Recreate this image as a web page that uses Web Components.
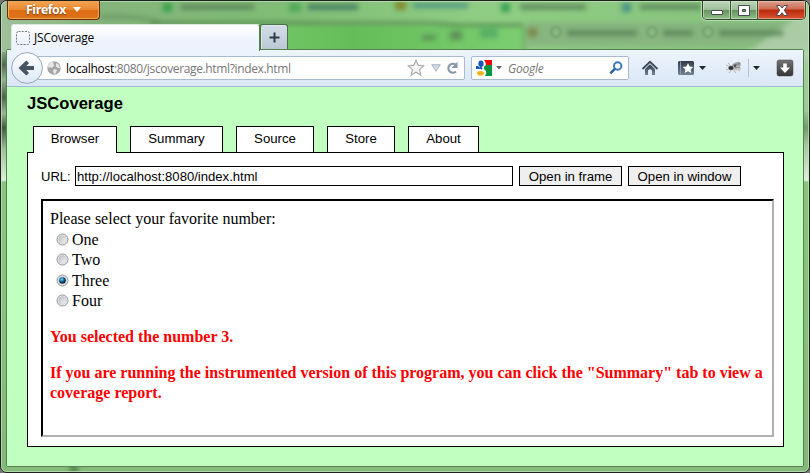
<!DOCTYPE html>
<html lang="en"><head><meta charset="utf-8"><title>JSCoverage</title>
<style>
html,body{margin:0;height:100%;overflow:hidden;background:#777}
</style></head><body>
<browser-window></browser-window>
<script>
const define=(name,html)=>customElements.define(name,class extends HTMLElement{
  constructor(){super();this.attachShadow({mode:'open'}).innerHTML=html;}
});

define('glass-backdrop',`<style>:host{display:block;position:absolute;inset:0;overflow:hidden}svg{display:block}.soft{filter:blur(2.6px)}.ghost{filter:blur(2.4px)}</style>
<svg width="808" height="471" viewBox="1 1 808 471">
<defs>
<linearGradient id="g" x1="0" x2="1" y1="0" y2="0"><stop offset="0" stop-color="#a0c09a"/><stop offset=".12" stop-color="#85b47c"/><stop offset=".35" stop-color="#80bd75"/><stop offset=".6" stop-color="#8fcd84"/><stop offset="1" stop-color="#87c27c"/></linearGradient>
<linearGradient id="m" x1="0" x2="1" y1="0" y2="0"><stop offset="0" stop-color="#86ba7d"/><stop offset=".3" stop-color="#79cb6c"/><stop offset=".6" stop-color="#64bd58"/><stop offset="1" stop-color="#7cce70"/></linearGradient>
<linearGradient id="s" x1="0" x2="0" y1="0" y2="1"><stop offset="0" stop-color="#86a67f"/><stop offset=".03" stop-color="#546653"/><stop offset=".065" stop-color="#94b28e"/><stop offset=".107" stop-color="#52634f"/><stop offset=".145" stop-color="#9bb695"/><stop offset=".18" stop-color="#465644"/><stop offset=".23" stop-color="#9fbc9a"/><stop offset=".3" stop-color="#dcecda"/><stop offset=".306" stop-color="#dcecda"/><stop offset=".308" stop-color="#8bc481"/><stop offset="1" stop-color="#82b879"/></linearGradient>
<linearGradient id="r" x1="0" x2="0" y1="0" y2="1"><stop offset="0" stop-color="#a3cc9c"/><stop offset=".14" stop-color="#98cb90"/><stop offset=".18" stop-color="#6f9c68"/><stop offset=".22" stop-color="#a5c6a0"/><stop offset=".3" stop-color="#dcecda"/><stop offset=".306" stop-color="#dcecda"/><stop offset=".308" stop-color="#8bc481"/><stop offset="1" stop-color="#82b879"/></linearGradient>
</defs>
<rect width="810" height="473" fill="#84bc7a"/>
<rect width="810" height="52" fill="url(#g)"/>
<rect y="52" width="7" height="421" fill="url(#s)"/>
<rect x="803" y="52" width="7" height="421" fill="url(#r)"/>
<g class="soft">
<rect x="98" y="26" width="425" height="40" fill="url(#m)"/>
<path d="M150 23H430L455 25H523" fill="none" stroke="#4a7445" stroke-width="3" opacity=".75"/>
<path d="M524 26V52" fill="none" stroke="#55804f" stroke-width="3" opacity=".5"/>
<path d="M100 17q30-2 60 5" fill="none" stroke="#54824d" stroke-width="4" opacity=".5"/>
<rect x="527" y="22" width="290" height="24" fill="#87b67f"/>
<path d="M735 60L830 -5V60Z" fill="#b4d1af" opacity=".8"/>
</g>
<g class="ghost" fill="#568056" opacity=".75">
<rect x="163" y="3" width="9" height="9" fill="#219b3c"/><rect x="181" y="4" width="73" height="6"/>
<rect x="289" y="3" width="12" height="9" fill="#43a151"/><rect x="308" y="4" width="50" height="6" fill="#38715f"/>
<rect x="395" y="1" width="11" height="9" fill="#807a17"/><rect x="413" y="3" width="55" height="5" fill="#3f8980"/>
<rect x="501" y="3" width="9" height="9" fill="#209443"/><rect x="520" y="4" width="66" height="6"/>
<rect x="622" y="3" width="9" height="9" fill="#34818b"/><rect x="640" y="4" width="61" height="6"/>
<rect x="422" y="35" width="14" height="5"/><rect x="450" y="31" width="12" height="9"/><rect x="480" y="28" width="18" height="10" fill="#3e9865" opacity=".7"/>
<rect x="528" y="28" width="9" height="9" fill="#807a3c"/>
<rect x="567" y="30" width="70" height="6"/><rect x="663" y="30" width="30" height="6"/><rect x="719" y="30" width="64" height="6"/>
<rect x="70" y="465" width="8" height="8" fill="#416f3c"/>
</g>
<g fill="none" stroke="#6d9b66" stroke-width="1.5" style="filter:blur(1.2px)"><circle cx="556" cy="32" r="5"/><circle cx="652" cy="32" r="5"/><circle cx="708" cy="32" r="5"/></g></svg>`);

define('firefox-button',`<style>:host{display:flex;align-items:center;box-sizing:border-box;width:93px;height:19px;padding:0 0 1px 18px;gap:7px;
border:1px solid #6b2f08;border-top:0;border-radius:0 0 4px 4px;background:linear-gradient(#f3a453,#e98932 48%,#dd6d14 52%,#dc7519);box-shadow:inset 1px 0 #f2b06a,inset -1px -1px #efa356;color:#fff;font:bold 12.3px "Open Sans",sans-serif;letter-spacing:-.4px;text-shadow:0 1px 2px #7a3600}</style>
<slot></slot><svg width="8" height="5"><path d="M0 0H8L4 5Z" fill="#fff"/></svg>`);

define('window-controls',`<style>:host{display:flex;box-sizing:border-box;width:104px;height:19px;border:1px solid #304a2d;border-top:0;border-radius:0 0 5px 5px;overflow:hidden;box-shadow:0 0 1px 1px #b9dcb4}
span{display:grid;place-items:center;width:27px;background:linear-gradient(#bdd5b8,#9ebf98 47%,#67915f 50%,#8ebe84);box-shadow:inset 0 0 0 1px #d5e8d199;border-right:1px solid #395537}
span:last-child{flex:1;border:0;background:linear-gradient(#dca394,#cc6b51 45%,#b92909 50%,#d5512f 95%);box-shadow:inset 0 0 0 1px #f2c1b399}</style>
<span><svg width="14" height="14"><rect x="1.5" y="7.5" width="11" height="4" rx=".5" fill="#fff" stroke="#454c55"/></svg></span>
<span style="width:26px"><svg width="14" height="13"><path d="M1.5 1.5H12.5V11.5H1.5ZM5.5 5.5V7.5H8.5V5.5Z" fill="#fff" fill-rule="evenodd" stroke="#454c55"/></svg></span>
<span><svg width="14" height="13"><path d="M1.5 1.5H5L7 4L9 1.5H12.5L9.3 6.2L12.7 11.5H9L7 8.7L5 11.5H1.3L4.7 6.2Z" fill="#fff" stroke="#55454d"/></svg></span>`);

define('browser-tab',`<style>:host{display:flex;align-items:center;box-sizing:border-box;width:249px;height:27px;padding:0 0 1px 4px;gap:4px;background:linear-gradient(#fff,#edf3fc 65%,#ecf3fc);border:1px solid #dcebdc;border-bottom:0;border-right-color:#57824f;border-radius:3px 3px 0 0;font:12px "Open Sans",sans-serif;letter-spacing:-.2px;color:#000}
svg{flex:none}</style><svg width="14" height="14"><rect x=".5" y=".5" width="13" height="13" rx="2" fill="none" stroke="#737982" stroke-dasharray="2 1.2"/></svg><slot></slot>`);

define('new-tab',`<style>:host{display:grid;place-items:center;box-sizing:border-box;width:28px;height:25px;background:linear-gradient(#d3dde6,#bac8d5);border:1px solid #477344;border-bottom:0;border-radius:3px 3px 0 0;box-shadow:inset 1px 1px #e1e8ed}</style>
<svg width="11" height="11"><path d="M4.5 .5V4.5H.5V6.5H4.5V10.5H6.5V6.5H10.5V4.5H6.5V.5Z" fill="#303a46"/></svg>`);

define('back-button',`<style>:host{display:block;width:32px;height:32px;margin-right:-15px;z-index:1}svg{display:block}</style>
<svg width="32" height="32"><defs><linearGradient id="g" x2="0" y2="1"><stop stop-color="#fff"/><stop offset="1" stop-color="#dce8f5"/></linearGradient></defs><circle cx="16" cy="16" r="15.4" fill="url(#g)" stroke="#95a7bd"/><path d="M7.5 16L15.3 8.5L18 11.2L15.3 14.1H23V18H15.3L18 20.9L15.3 23.6Z" fill="#465360"/></svg>`);

define('address-bar',`<style>:host{display:flex;align-items:center;box-sizing:border-box;width:437px;height:24px;padding:0 5px 0 18px;background:#fff;border:1px solid #a8bbd2;border-radius:2px;font:12px "Open Sans",sans-serif;color:#777}
b{font-weight:400;color:#000;letter-spacing:-.25px}.t{flex:1;margin-left:5px;white-space:nowrap}svg{flex:none}.s{margin-right:6px}.d{margin-right:4px}.h{letter-spacing:-.36px}</style>
<svg width="14" height="14"><circle cx="7" cy="7" r="6.7" fill="#a5a5a5"/><path d="M1 4L4 1L7 1.4L6 3L7.5 4L5 7L3 6L1.5 7ZM9 2L12 4L13 7L11 7L9 5.5ZM7 8L10 9L9 12L7 13L6 10Z" fill="#e8e8e8"/></svg>
<span class="t"><b>localhost</b><span class="h">:8080/jscoverage.html?index.html</span></span>
<svg class="s" width="18" height="18"><path d="M9 1.3L11.2 6.3L16.7 6.9L12.6 10.6L13.8 16.1L9 13.2L4.2 16.1L5.4 10.6L1.3 6.9L6.8 6.3Z" fill="#f4f4f4" stroke="#a6a6a6" stroke-width="1.1"/></svg>
<svg class="d" width="10" height="8"><path d="M.7 .7H9.3L5 7.3Z" fill="#cfdae6" stroke="#acb5c2"/></svg>
<svg width="14" height="14"><path d="M10.4 3.5A4.5 4.5 0 1 0 11 10.5" fill="none" stroke="#8898a8" stroke-width="2.2"/><path d="M12.5 .8V7H6.5Z" fill="#8898a8"/></svg>`);

define('search-bar',`<style>:host{display:flex;align-items:center;box-sizing:border-box;width:158px;height:24px;margin-left:6px;padding:0 5px 0 4px;background:#fff;border:1px solid #a8bbd2;border-radius:2px;font:italic 12px "Open Sans",sans-serif;letter-spacing:-.25px;color:#777}span{flex:1;margin-left:6px}.d{margin-left:4px}</style>
<svg width="16" height="16"><rect width="16" height="16" fill="#fff"/><path d="M8 0H16V5H10Q10 2 8 0Z" fill="#ed0909"/><path d="M10 5H16V16H9Q12 12 8 9Q7 7 10 5Z" fill="#0a963e"/><path d="M0 6H2L5 9H0Z" fill="#1459bd"/><ellipse cx="5" cy="3.7" rx="2.6" ry="3.3" fill="#1557bd"/><path d="M4 7L6 9" stroke="#1557bd" stroke-width="2"/><ellipse cx="4.5" cy="13.2" rx="3.4" ry="2.3" fill="#efb416"/></svg>
<svg class="d" width="6" height="4"><path d="M0 0H6L3 3.5Z" fill="#666"/></svg><span>Google</span>
<svg width="14" height="14"><circle cx="8.7" cy="5" r="3.7" fill="#fff" stroke="#3a7ab7" stroke-width="2"/><path d="M6.1 7.6L1.3 12.4" stroke="#2f649b" stroke-width="2.5"/></svg>`);

define('tool-icons',`<style>:host{display:flex;align-items:center;margin-left:12px}svg{display:block}</style>
<svg width="153" height="20" viewBox="641 58 153 20"><defs><linearGradient id="g" x2="0" y2="1"><stop stop-color="#303c4a"/><stop offset="1" stop-color="#718294"/></linearGradient><linearGradient id="d" x2="0" y2="1"><stop stop-color="#747474"/><stop offset="1" stop-color="#353535"/></linearGradient></defs>
<path d="M642.5 69L650 61.8L657.5 69" fill="none" stroke="#3c4855" stroke-width="1.8"/><path d="M645 69L650 64.3L655 69V75H652V70.5Q650 68 648 70.5V75H645Z" fill="url(#g)"/>
<rect x="678" y="61" width="16" height="14" rx="1.5" fill="url(#g)"/><path d="M680.5 61.5V74.5" stroke="#8c9aaa"/><path d="M688 63L689.6 66.4L693.3 66.9L690.6 69.4L691.3 73.1L688 71.3L684.7 73.1L685.4 69.4L682.7 66.9L686.4 66.4Z" fill="#fff"/>
<path d="M699 66H706L702.5 70ZM753 66H760L756.5 70Z" fill="#202833"/>
<g><path d="M726 65L730 67M726 70L730 68.5M729 73L732 69M736 73L733 69M740 71L735 68M728 63L732 67" stroke="#b2b3b5"/><ellipse cx="736" cy="65.4" rx="5" ry="2.8" transform="rotate(-25 736 65)" fill="#a6a6a6"/><ellipse cx="736.5" cy="68.2" rx="4.4" ry="2.2" fill="#c6c6c6"/><path d="M734 65L740 63.5M735 68L740 67" stroke="#666" stroke-width=".7"/><ellipse cx="731" cy="68" rx="2.6" ry="2.1" fill="#333"/><circle cx="735" cy="66" r="1.4" fill="#555"/></g>
<path d="M748.5 59V77" stroke="#b5c1d0"/><rect x="777" y="60" width="16" height="16" rx="2" fill="url(#d)" stroke="#444" stroke-width=".5"/><path d="M783.2 63.5H786.8V67.5H790L785 73L780 67.5H783.2Z" fill="#fff"/></svg>`);

define('nav-toolbar',`<style>:host{display:flex;align-items:center;box-sizing:border-box;height:37px;padding-left:4px;background:linear-gradient(#edf4fc,#dae7f6);border-bottom:1px solid #a6b9d2}</style>
<back-button></back-button><address-bar></address-bar><search-bar></search-bar><tool-icons></tool-icons>`);

define('page-tab',`<style>:host{box-sizing:border-box;height:26px;font-size:13.2px;line-height:23px;border:1px solid #000;border-bottom:0;background:#fff;text-align:center}:host([active]){height:27px}</style><slot></slot>`);
define('push-button',`<style>:host{box-sizing:border-box;height:20px;font-size:13.2px;line-height:19px;border:1px solid #000;background:#efefef;text-align:center}</style><slot></slot>`);
define('url-field',`<style>:host{box-sizing:border-box;width:438px;height:20px;font-size:13.1px;line-height:19px;border:1px solid #000;padding-left:1px;background:#fff}</style><slot></slot>`);

define('radio-option',`<style>:host{display:flex;align-items:center;height:20px;padding-left:6px;gap:3px}svg{flex:none;margin-top:-2px}.dot{display:none}:host([checked]) .dot{display:block}</style>
<svg width="13" height="13"><defs><linearGradient id="g" x2="1" y2="1"><stop offset=".15" stop-color="#bfc4ca"/><stop offset="1" stop-color="#f6f6f6"/></linearGradient><radialGradient id="b" cx=".4" cy=".35"><stop stop-color="#a7e8ff"/><stop offset=".4" stop-color="#2591c5"/><stop offset="1" stop-color="#082e4b"/></radialGradient></defs><circle cx="6.5" cy="6.5" r="5.5" fill="#f5f5f5" stroke="#8e8f8f"/><circle cx="6.5" cy="6.5" r="4" fill="url(#g)" stroke="#c0c3c7" stroke-width=".6"/><circle class="dot" cx="6.5" cy="6.5" r="3.3" fill="url(#b)"/></svg><slot></slot>`);

define('page-frame',`<style>:host{display:block;box-sizing:border-box;width:733px;height:238px;margin-top:13px;padding:8px 7px;border:2px solid;border-color:#000 #b0b0b0 #b0b0b0 #000;font:16px/20px "Liberation Serif","Times New Roman",serif}p{margin:16px 0 0;font-weight:700;color:#f00}.three{margin-top:1px}.q{height:21px}</style>
<div class="q">Please select your favorite number:</div>
<radio-option>One</radio-option><radio-option>Two</radio-option><radio-option checked class="three">Three</radio-option><radio-option>Four</radio-option>
<p>You selected the number 3.</p><p>If you are running the instrumented version of this program, you can click the "Summary" tab to view a<br>coverage report.</p>`);

define('coverage-page',`<style>:host{display:block;box-sizing:border-box;height:379px;padding:7px 19px 0 20px;background:#c0ffc0;font:13px "Liberation Sans",Arial,sans-serif;color:#000}
h1{margin:0;font-size:16.6px;line-height:20px;height:32px}nav{display:flex;align-items:flex-start;gap:13px;height:26px;padding-left:6px}nav>:first-child{position:relative;z-index:1}
main{display:block;box-sizing:border-box;width:757px;height:295px;padding:13px;background:#fff;border:1px solid #000}.row{display:flex;gap:6px;height:20px}.row span{width:28px;line-height:21px;white-space:nowrap}</style>
<h1>JSCoverage</h1><nav><page-tab active style="width:84px">Browser</page-tab><page-tab style="width:93px">Summary</page-tab><page-tab style="width:78px">Source</page-tab><page-tab style="width:68px">Store</page-tab><page-tab style="width:71px">About</page-tab></nav>
<main><div class="row"><span>URL:</span><url-field>http://localhost:8080/index.html</url-field><push-button style="width:103px">Open in frame</push-button><push-button style="width:113px">Open in window</push-button></div><page-frame></page-frame></main>`);

define('browser-window',`<style>:host{display:block;position:relative;box-sizing:border-box;width:810px;height:473px;border:1px solid #1b221a;border-radius:7px;overflow:hidden}
.edge{position:absolute;inset:0;border:1px solid #c8e5c3aa;border-radius:6px;pointer-events:none}.all{position:relative;padding:0 6px}
.title{display:flex;justify-content:space-between;height:19px}.title window-controls{margin-right:-3px}.tabs{display:flex;align-items:flex-end;height:29px;padding-left:4px}
.body{margin:0 -1px;border:1px solid #568150;border-radius:2px}.tabs browser-tab{margin-bottom:-2px;position:relative;z-index:2}</style>
<glass-backdrop></glass-backdrop><div class="edge"></div><div class="all"><div class="title"><firefox-button>Firefox</firefox-button><window-controls></window-controls></div>
<div class="tabs"><browser-tab>JSCoverage</browser-tab><new-tab></new-tab></div>
<div class="body"><nav-toolbar></nav-toolbar><coverage-page></coverage-page></div></div>`);
</script></body></html>
